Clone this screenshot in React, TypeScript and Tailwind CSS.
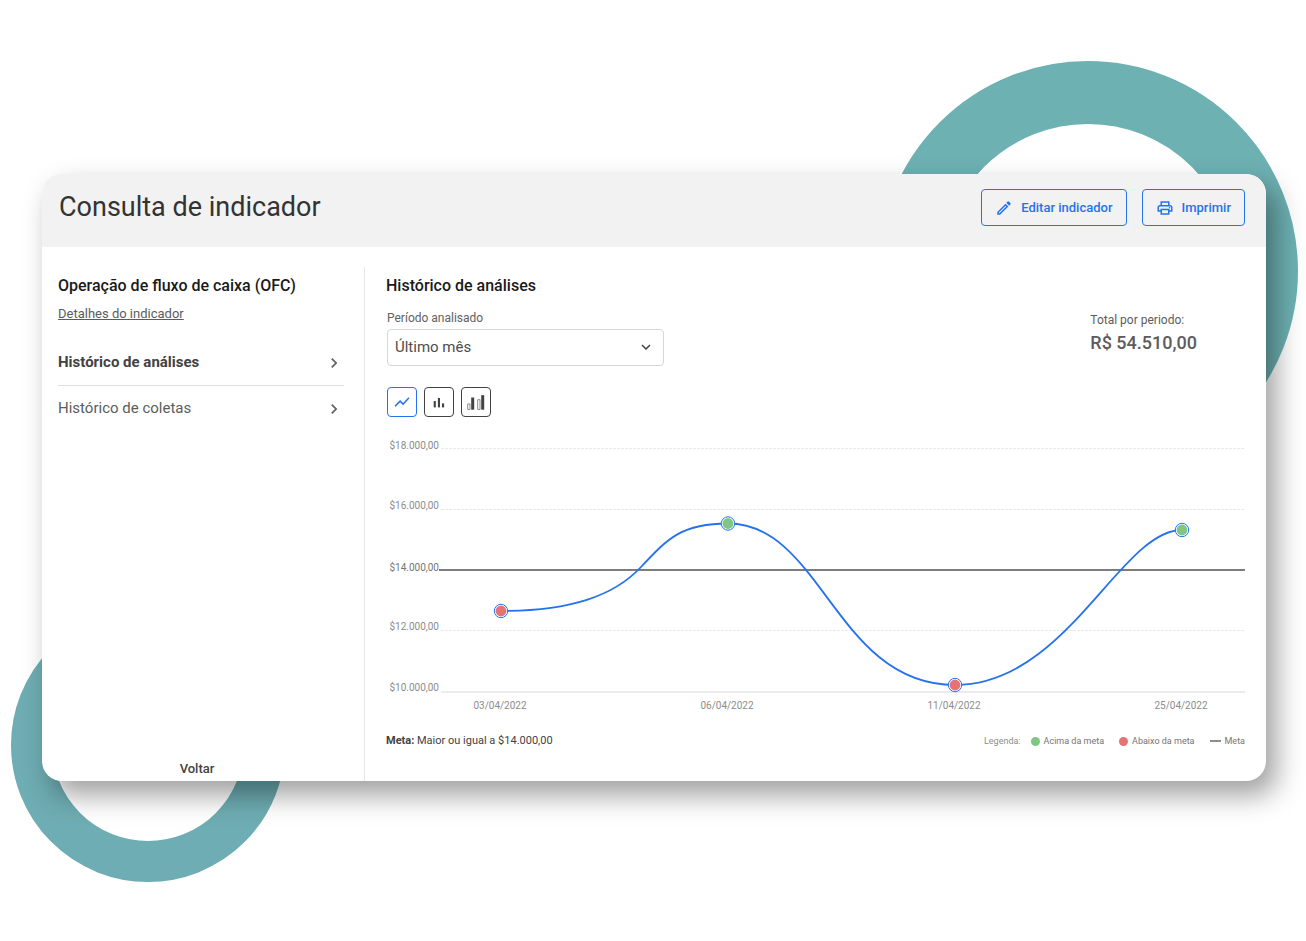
import { useState } from "react";
import { MdChevronRight, MdKeyboardArrowDown, MdOutlineModeEdit, MdOutlinePrint, MdShowChart } from "react-icons/md";

const menuItems = [
    { name: "Histórico de análises", active: true },
    { name: "Histórico de coletas", active: false },
];

const gridLines = [
    { label: "$18.000,00", y: 12, labelY: 13 },
    { label: "$16.000,00", y: 73, labelY: 73 },
    { label: "$12.000,00", y: 194, labelY: 194 },
];

const points = [
    { date: "03/04/2022", x: 115, y: 175, above: false },
    { date: "06/04/2022", x: 342, y: 87.5, above: true },
    { date: "11/04/2022", x: 569, y: 249, above: false },
    { date: "25/04/2022", x: 796, y: 94, above: true },
];

const BarsIcon = () => (
    <svg viewBox="0 0 16 16" className="h-4 w-4" fill="currentColor" aria-hidden="true">
        <rect x="2.7" y="7" width="2.1" height="6.400" />
        <rect x="6.9" y="4" width="2.1" height="9.400" />
        <rect x="11" y="9.4" width="2.1" height="4" />
    </svg>
);

const GroupedBarsIcon = () => (
    <svg viewBox="0 0 18 18" className="h-[18px] w-[18px]" aria-hidden="true">
        <g fill="none" stroke="currentColor" strokeWidth="0.6">
            <rect x="0.8" y="11" width="2.2" height="5.4" />
            <rect x="10.8" y="6.8" width="2.2" height="9.6" />
        </g>
        <g fill="currentColor">
            <rect x="4.2" y="4.5" width="3" height="12.2" />
            <rect x="14.2" y="2.2" width="3" height="14.500" />
        </g>
    </svg>
);

const chartTypes = [
    { name: "Linha", icon: <MdShowChart className="h-[18px] w-[18px]" /> },
    { name: "Barras", icon: <BarsIcon /> },
    { name: "Barras agrupadas", icon: <GroupedBarsIcon /> },
];

const LineChart = () => (
    <svg viewBox="0 0 859 280" className="block w-full" role="img" aria-label="Histórico de análises">
        {gridLines.map((line) => (
            <g key={line.label}>
                <line x1="55" x2="859" y1={line.y + 0.5} y2={line.y + 0.5} stroke="#e9e9e9" strokeDasharray="3 1" />
                <text x="53" y={line.labelY} textAnchor="end" fontSize="10" fill="#8c8c8c">{line.label}</text>
            </g>
        ))}

        {/* Baseline */}
        <line x1="55" x2="859" y1="256" y2="256" stroke="#ebebeb" strokeWidth="2" />
        <text x="53" y="255" textAnchor="end" fontSize="10" fill="#8c8c8c">$10.000,00</text>

        {/* Goal */}
        <line x1="53" x2="859" y1="134" y2="134" stroke="#7d7d7d" strokeWidth="2" />
        <text x="53" y="135" textAnchor="end" fontSize="10" fill="#757575">$14.000,00</text>

        <path
            d="M115 175C184 175 228 160 255 131C282 102 296 87.500 342 87.500C436 87.500 450 249 569 249C681 249 734 94 796 94"
            fill="none"
            stroke="#2472ee"
            strokeWidth="1.8"
        />
        {points.map((p) => (
            <g key={p.date}>
                <circle cx={p.x} cy={p.y} r="6.7" fill="#fff" stroke="#2472ee" />
                <circle cx={p.x} cy={p.y} r="5.4" fill={p.above ? "#81c784" : "#e57373"} />
                <text x={p.x - 1} y="273" textAnchor="middle" fontSize="10" fill="#8c8c8c">{p.date}</text>
            </g>
        ))}
    </svg>
);

const Sidebar = () => (
    <aside className="flex w-[322px] shrink-0 flex-col pt-[29px] pr-5 pl-4">
        <h2 className="text-base leading-5 font-medium text-[#1a1a1a]">Operação de fluxo de caixa (OFC)</h2>
        <a href="#detalhes" className="mt-2 self-start text-[13px] leading-5 text-[#5c5c5c] underline">
            Detalhes do indicador
        </a>
        <nav className="mt-4 flex flex-col">
            {menuItems.map((item) => (
                <a
                    key={item.name}
                    href="#historico"
                    className={`flex h-[45px] items-center justify-between text-[15px] ${item.active ? "box-content border-b border-[#e0e0e0] font-bold text-[#424242]" : "text-[#5c5c5c]"}`}
                >
                    <span>{item.name}</span>
                    <MdChevronRight className="h-5 w-5 text-[#616161]" />
                </a>
            ))}
        </nav>
        <button type="button" className="mt-auto self-center pr-2 text-[13px] leading-6 font-medium text-[#424242]">
            Voltar
        </button>
    </aside>
);

const App = () => {
    const [chartType, setChartType] = useState("Linha");

    return (
        <div className="min-h-screen overflow-hidden bg-white pt-[174px] pr-10 pb-40 pl-[42px] font-['Roboto',sans-serif]">
            <div className="relative">
                {/* Background rings */}
                <div className="absolute -top-[113px] -right-8 h-[420px] w-[420px] rounded-full border-[63px] border-[#6eb1b3]" />
                <div className="absolute -bottom-[101px] -left-[31px] h-[274px] w-[274px] rounded-full border-[41px] border-[#6eadb3]" />

                <main className="relative overflow-hidden rounded-[20px] bg-white shadow-[10px_14px_28px_rgba(0,0,0,0.38)]">
                    <header className="flex h-[73px] items-start justify-between bg-[#f2f2f2] pt-[15px] pr-[21px] pl-[17px]">
                        <h1 className="text-[27px] leading-9 text-[#333333]">Consulta de indicador</h1>
                        <div className="flex gap-[15px]">
                            <button type="button" className="flex h-[37px] items-center gap-2 rounded-[4px] border border-[#2472ee] px-[13px] text-[13px] font-medium text-[#2472ee]">
                                <MdOutlineModeEdit className="h-[18px] w-[18px]" />
                                Editar indicador
                            </button>
                            <button type="button" className="flex h-[37px] items-center gap-2 rounded-[4px] border border-[#2472ee] px-[13px] text-[13px] font-medium text-[#2472ee]">
                                <MdOutlinePrint className="h-[18px] w-[18px]" />
                                Imprimir
                            </button>
                        </div>
                    </header>

                    <div className="flex">
                        <Sidebar />

                        <section className="mt-5 min-w-0 flex-1 border-l border-[#e8e8e8] pt-[9px] pr-[21px] pb-[30px] pl-[21px]">
                            <h2 className="text-base leading-5 font-medium text-[#1a1a1a]">Histórico de análises</h2>

                            <div className="flex justify-between">
                                <div className="mt-3 flex flex-col pl-px">
                                    <label htmlFor="periodo" className="mb-px text-xs leading-5 text-[#616161]">Período analisado</label>
                                    <div className="relative">
                                        <select id="periodo" className="h-[37px] w-[277px] appearance-none rounded-[4px] border border-[#d6d6d6] bg-white px-[7px] text-[15px] text-[#4d4d4d]">
                                            <option>Último mês</option>
                                        </select>
                                        <MdKeyboardArrowDown className="pointer-events-none absolute top-[9px] right-[9px] h-[18px] w-[18px] text-[#424242]" />
                                    </div>
                                </div>
                                <div className="mt-[14px] mr-12 text-[#5c5c5c]">
                                    <p className="text-xs leading-5">Total por periodo:</p>
                                    <p className="text-lg leading-[26px] font-medium">R$ 54.510,00</p>
                                </div>
                            </div>

                            <div className="mt-[21px] mb-[19px] flex gap-[7px] pl-px">
                                {chartTypes.map((type) => (
                                    <button
                                        key={type.name}
                                        type="button"
                                        aria-label={type.name}
                                        onClick={() => setChartType(type.name)}
                                        className={`flex h-[30px] w-[30px] items-center justify-center rounded-[4px] border ${chartType === type.name ? "border-[#2472ee] text-[#2472ee]" : "border-[#424242] text-[#424242]"}`}
                                    >
                                        {type.icon}
                                    </button>
                                ))}
                            </div>

                            <LineChart />

                            <div className="mt-[15px] flex items-center justify-between">
                                <p className="text-[11px] leading-5 text-[#424242]">
                                    <strong>Meta:</strong> Maior ou igual a $14.000,00
                                </p>
                                <div className="flex items-center text-[9px] leading-5 text-[#757575]">
                                    <span className="mr-[10px] text-[#8c8c8c]">Legenda:</span>
                                    <span className="mr-1 h-[9px] w-[9px] rounded-full bg-[#81c784]" />
                                    <span className="mr-[15px]">Acima da meta</span>
                                    <span className="mr-1 h-[9px] w-[9px] rounded-full bg-[#e57373]" />
                                    <span className="mr-[15px]">Abaixo da meta</span>
                                    <span className="mr-1 h-[2px] w-[11px] bg-[#8c8c8c]" />
                                    <span>Meta</span>
                                </div>
                            </div>
                        </section>
                    </div>
                </main>
            </div>
        </div>
    );
};

export default App;
